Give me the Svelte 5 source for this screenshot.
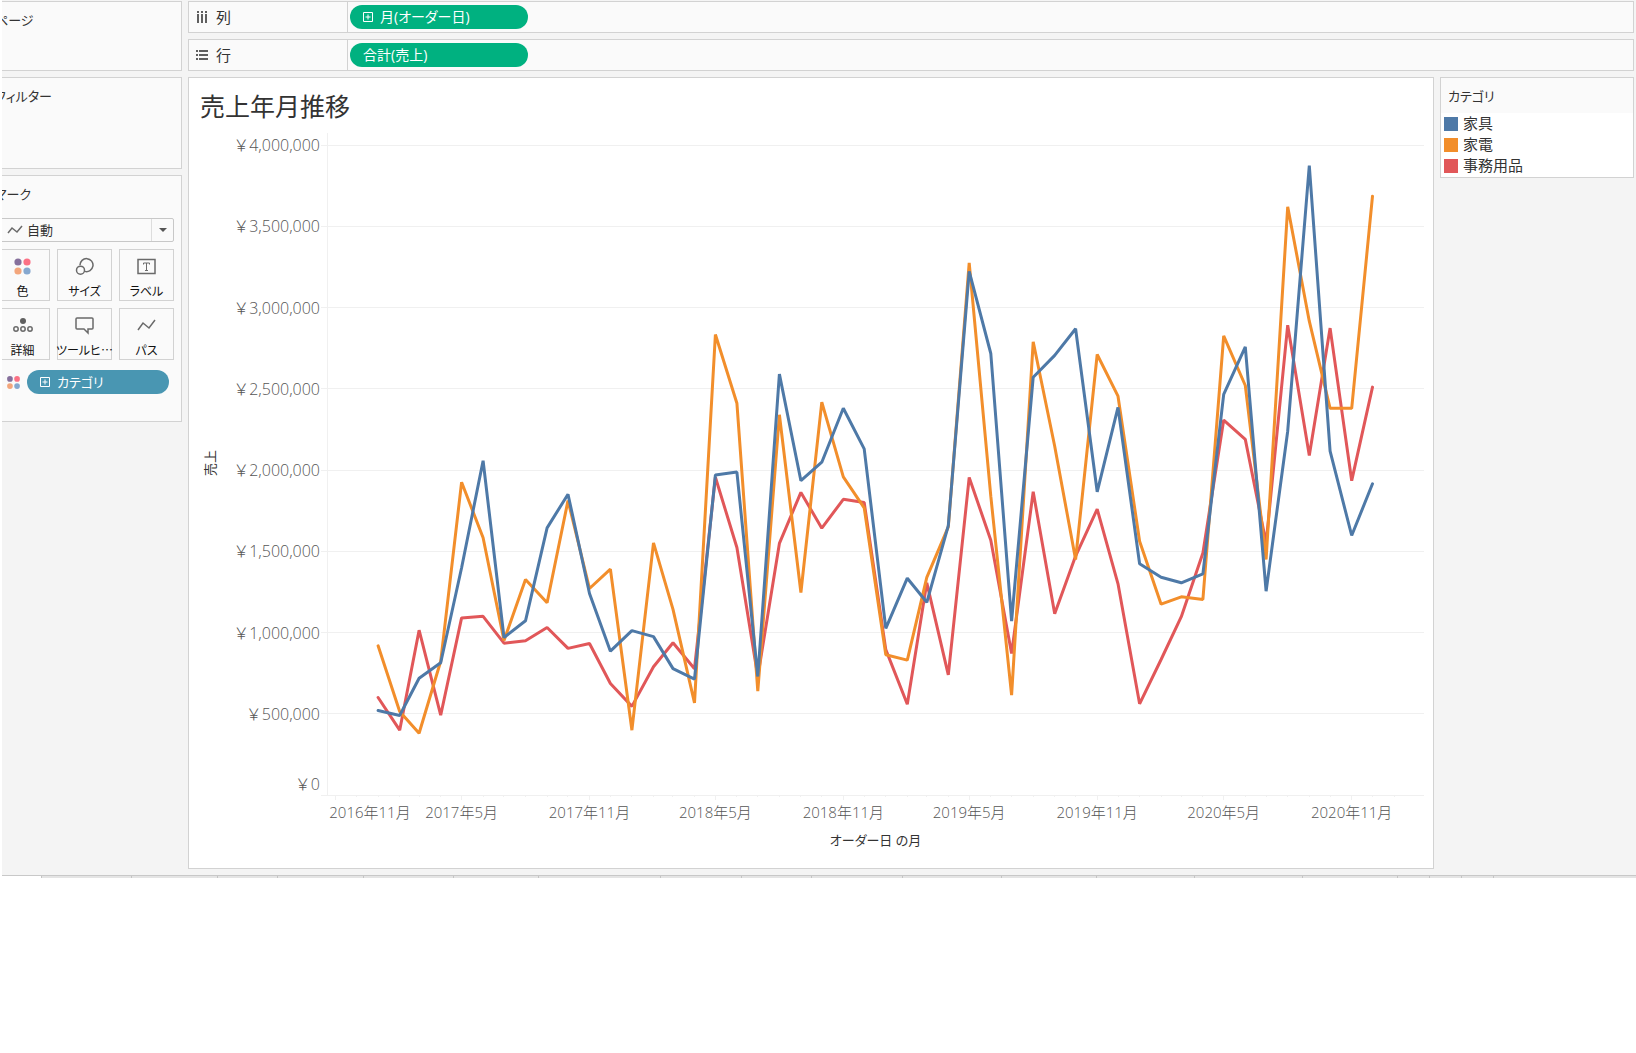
<script lang="ts">
  type Series = { name: string; color: string; values: number[] };

  // monthly sales from January 2017, in thousands of yen
  const series: Series[] = [
    {
      name: "家具",
      color: "#4e79a7",
      values: [
        520, 489, 719, 814, 1398, 2057, 969, 1072, 1644, 1851, 1240, 885,
        1012, 975, 778, 713, 1970, 1987, 729, 2590, 1934, 2048, 2380, 2130,
        1025, 1334, 1186, 1657, 3223, 2717, 1070, 2571, 2705, 2869, 1866, 2385,
        1423, 1340, 1306, 1361, 2465, 2758, 1254, 2239, 3874, 2116, 1597, 1915,
      ],
    },
    {
      name: "家電",
      color: "#f28e2b",
      values: [
        918, 514, 380, 823, 1925, 1583, 951, 1326, 1183, 1812, 1271, 1390,
        399, 1552, 1142, 567, 2834, 2411, 639, 2340, 1246, 2417, 1958, 1767,
        863, 830, 1340, 1650, 3275, 1839, 614, 2789, 2146, 1449, 2711, 2454,
        1562, 1174, 1220, 1203, 2826, 2520, 1449, 3620, 2916, 2380, 2380, 3685,
      ],
    },
    {
      name: "事務用品",
      color: "#e15759",
      values: [
        600, 399, 1014, 491, 1090, 1100, 934, 949, 1031, 902, 932, 686,
        545, 789, 937, 777, 1956, 1523, 729, 1548, 1862, 1642, 1820, 1800,
        895, 559, 1306, 740, 1954, 1568, 871, 1866, 1115, 1470, 1759, 1300,
        561, 834, 1097, 1490, 2307, 2188, 1550, 2891, 2089, 2873, 1934, 2510,
      ],
    },
  ];

  const left = 138;
  const top = 15;
  const bottom = 665;
  const start = Date.UTC(2016, 9, 19, 12);
  const end = Date.UTC(2021, 1, 13);
  const yTicks = [0, 500, 1000, 1500, 2000, 2500, 3000, 3500, 4000];

  let width = $state(1244);
  let right = $derived(width - 9);

  // months are counted from January 2017
  function x(month: number) {
    return left + ((Date.UTC(2017, month, 1) - start) / (end - start)) * (right - left);
  }
  function y(value: number) {
    return bottom - (value / 4000) * (bottom - top);
  }
  function points(s: Series) {
    return s.values.map((v, i) => `${x(i).toFixed(1)},${y(v).toFixed(1)}`).join(" ");
  }
  function monthLabel(month: number) {
    const d = new Date(Date.UTC(2017, month, 1));
    return `${d.getUTCFullYear()}年${d.getUTCMonth() + 1}月`;
  }

  const months = Array.from({ length: 51 }, (_, i) => i - 2);
  const majors = months.filter((m) => (m + 2) % 6 === 0 && m < 48);
  const dividers = [41, 131, 217, 277, 363, 453, 538, 660, 741, 811, 902, 1001, 1096, 1194, 1302, 1397, 1429, 1461, 1493];
  let mark = $state("auto");
</script>

{#snippet dots()}
  <circle cx="5" cy="5" r="3.6" fill="#86709c" />
  <circle cx="14" cy="5" r="3.6" fill="#fb7185" />
  <circle cx="5" cy="14" r="3.6" fill="#f3a67c" />
  <circle cx="14" cy="14" r="3.6" fill="#86a8cf" />
{/snippet}

{#snippet plus()}
  <svg class="plus" width="10" height="10" viewBox="0 0 10 10">
    <path d="M.5.5h9v9h-9zM5 2.5v5M2.5 5h5" />
  </svg>
{/snippet}

<div class="workspace">
  <aside class="sidebar">
    <section class="card pages"><h2>ページ</h2></section>
    <section class="card filters"><h2>フィルター</h2></section>
    <section class="card marks">
      <h2>マーク</h2>
      <div class="mark-type">
        <svg width="16" height="12" viewBox="0 0 16 12" class="line-icon"><path d="M1 9l4-5 5 4 5-6" /></svg>
        <select bind:value={mark} aria-label="マーク">
          <option value="auto">自動</option>
        </select>
        <span class="arrow"></span>
      </div>
      <div class="mark-grid">
        <button>
          <svg width="19" height="19" viewBox="0 0 19 19">{@render dots()}</svg>
          <span>色</span>
        </button>
        <button>
          <svg width="19" height="19" viewBox="0 0 19 19" class="line-icon">
            <path d="M5 8.2A6.5 6.5 0 1 1 9.8 14.4" />
            <circle cx="5.5" cy="13.2" r="4" />
          </svg>
          <span>サイズ</span>
        </button>
        <button>
          <svg width="19" height="19" viewBox="0 0 19 19" class="line-icon">
            <path d="M1 2.5h17v14H1z" />
            <path class="thin" d="M6.5 7.5V6h6v1.500M9.500 6v7.500M8 13.500h3" />
          </svg>
          <span>ラベル</span>
        </button>
        <button>
          <svg width="20" height="19" viewBox="0 0 20 19" class="line-icon">
            <circle cx="10" cy="5" r="3" class="solid" />
            <circle cx="3" cy="13" r="2.2" />
            <circle cx="10" cy="13" r="2.2" />
            <circle cx="17" cy="13" r="2.2" />
          </svg>
          <span>詳細</span>
        </button>
        <button>
          <svg width="19" height="19" viewBox="0 0 19 19" class="line-icon">
            <path d="M2 2h15a1 1 0 0 1 1 1v9a1 1 0 0 1-1 1h-4v4l-4-4H2a1 1 0 0 1-1-1V3a1 1 0 0 1 1-1z" />
          </svg>
          <span>ツールヒ⋯</span>
        </button>
        <button>
          <svg width="19" height="19" viewBox="0 0 19 19" class="line-icon"><path d="M1 14l5-7 6 5 6-8" /></svg>
          <span>パス</span>
        </button>
      </div>
      <div class="encoding">
        <svg width="15" height="15" viewBox="0 0 19 19">{@render dots()}</svg>
        <button class="pill dimension">{@render plus()}カテゴリ</button>
      </div>
    </section>
  </aside>

  <main>
    <div class="shelf">
      <div class="shelf-name">
        <svg width="12" height="12" viewBox="0 0 12 12" class="solid">
          <path d="M1 0h2v2H1zM5 0h2v2H5zM9 0h2v2H9zM1 3h2v9H1zM5 3h2v9H5zM9 3h2v9H9z" />
        </svg>
        列
      </div>
      <button class="pill measure">{@render plus()}月(オーダー日)</button>
    </div>
    <div class="shelf">
      <div class="shelf-name">
        <svg width="12" height="12" viewBox="0 0 12 12" class="solid">
          <path d="M0 1h2v2H0zM0 5h2v2H0zM0 9h2v2H0zM3 1h9v2H3zM3 5h9v2H3zM3 9h9v2H3z" />
        </svg>
        行
      </div>
      <button class="pill measure">合計(売上)</button>
    </div>

    <div class="view">
      <section class="sheet">
        <h1>売上年月推移</h1>
        <div class="chart" bind:clientWidth={width}>
          <svg {width} height="738" role="img" aria-label="売上年月推移">
            <g class="grid">
              {#each yTicks as t}
                <line x1={left - 6} x2={right} y1={y(t)} y2={y(t)} />
              {/each}
              <line x1={left} x2={left} y1="3" y2={bottom} />
              {#each months as m}
                <line x1={x(m)} x2={x(m)} y1={bottom} y2={bottom + (majors.includes(m) ? 5 : 2)} />
              {/each}
            </g>
            {#each [...series].reverse() as s}
              <polyline points={points(s)} stroke={s.color} />
            {/each}
            <g class="tick y">
              {#each yTicks as t}
                <text x={left - 7} y={t ? y(t) + 6 : bottom - 5}>￥{(t * 1000).toLocaleString("en-US")}</text>
              {/each}
            </g>
            <g class="tick">
              {#each majors as m}
                <text x={Math.max(x(m), left + 43)} y={bottom + 23}>{monthLabel(m)}</text>
              {/each}
            </g>
            <text class="axis-title" x={(left + right) / 2} y={bottom + 50}>オーダー日 の月</text>
            <text class="axis-title" transform="translate(26 333) rotate(-90)">売上</text>
          </svg>
        </div>
      </section>

      <section class="card legend">
        <h2>カテゴリ</h2>
        <ul>
          {#each series as s}
            <li><span class="swatch" style:background={s.color}></span>{s.name}</li>
          {/each}
        </ul>
      </section>
    </div>
  </main>
</div>
<svg class="tab-edge" width="100%" height="2">
  <rect class="strip" x={dividers[0]} width="100%" height="2" />
  {#each dividers as d}
    <rect x={d} width="1" height="2" />
  {/each}
</svg>

<style>
  :global(body) {
    background: #fff;
    color: #333;
    font-family: "Open Sans", "Noto Sans CJK JP", sans-serif;
    font-size: 15px;
  }
  h1,
  h2,
  ul {
    margin: 0;
    padding: 0;
    font-weight: 400;
  }
  h2,
  .mark-grid span,
  .pill,
  .axis-title {
    font-feature-settings: "palt";
  }
  button,
  select {
    font: inherit;
    color: inherit;
  }
  .workspace {
    display: flex;
    gap: 6px;
    margin-left: 2px;
    padding: 1px 2px 6px 0;
    overflow: hidden;
    background: #f4f4f4;
    border-bottom: 1px solid #c8c8c8;
  }
  .sidebar {
    flex: none;
    display: flex;
    flex-direction: column;
    gap: 6px;
    width: 191px;
    margin-left: -11px;
  }
  .card {
    box-sizing: border-box;
    background: #fafafa;
    border: 1px solid #d2d2d2;
  }
  .card h2 {
    font-size: 13px;
    line-height: 20px;
    padding: 8px 0;
  }
  .sidebar .card {
    padding: 0 7px 0 3px;
  }
  .pages {
    min-height: 70px;
  }
  .filters {
    min-height: 92px;
  }
  .marks {
    min-height: 247px;
  }
  .mark-type {
    display: flex;
    align-items: center;
    height: 22px;
    margin-top: 6px;
    padding-left: 11px;
    border: 1px solid #c8c8c8;
    border-radius: 2px;
  }
  .mark-type select {
    flex: 1;
    min-width: 0;
    height: 22px;
    padding: 0 4px;
    border: none;
    background: transparent;
    appearance: none;
    font-size: 13px;
  }
  .arrow {
    display: flex;
    align-items: center;
    justify-content: center;
    width: 21px;
    height: 22px;
    border-left: 1px solid #ddd;
  }
  .arrow::after {
    content: "";
    border: 4px solid transparent;
    border-top-color: #555;
    border-bottom: none;
  }
  .mark-grid {
    display: grid;
    grid-template-columns: repeat(3, 1fr);
    gap: 7px;
    margin-top: 7px;
  }
  .mark-grid button {
    display: flex;
    flex-direction: column;
    align-items: center;
    justify-content: space-between;
    min-width: 0;
    height: 52px;
    padding: 7px 0 0;
    background: #fafafa;
    border: 1px solid #d2d2d2;
    color: #111;
    font-size: 12px;
    line-height: 18px;
    white-space: nowrap;
  }
  .mark-grid span {
    height: 17px;
  }
  .line-icon {
    fill: none;
    stroke: #6a6a6a;
    stroke-width: 1.5;
  }
  .thin {
    stroke-width: 1;
  }
  .solid {
    fill: #5f5f5f;
    stroke: none;
  }
  .encoding {
    display: flex;
    align-items: center;
    gap: 6px;
    margin: 10px 5px 0 11px;
  }
  .encoding .pill {
    flex: 1;
  }
  .pill {
    display: flex;
    align-items: center;
    gap: 7px;
    height: 24px;
    padding: 0 13px;
    border: none;
    border-radius: 12px;
    color: #fff;
    font-size: 14px;
    line-height: 24px;
  }
  .dimension {
    background: #4996b2;
    font-size: 13px;
  }
  .measure {
    width: 178px;
    background: #00b180;
  }
  .plus {
    fill: none;
    stroke: #fff;
  }
  main {
    flex: 1;
    min-width: 0;
    display: flex;
    flex-direction: column;
    gap: 6px;
  }
  .shelf {
    display: flex;
    align-items: center;
    gap: 2px;
    height: 30px;
    background: #fafafa;
    border: 1px solid #d2d2d2;
  }
  .shelf-name {
    box-sizing: border-box;
    display: flex;
    align-items: center;
    gap: 8px;
    width: 159px;
    height: 30px;
    padding-left: 7px;
    border-right: 1px solid #d2d2d2;
    line-height: 20px;
  }
  .view {
    display: flex;
    align-items: flex-start;
    gap: 6px;
  }
  .sheet {
    flex: 1;
    min-width: 0;
    background: #fff;
    border: 1px solid #d2d2d2;
  }
  .sheet h1 {
    padding: 10px 11px 6px;
    font-size: 25px;
    line-height: 36px;
  }
  .chart {
    overflow: hidden;
  }
  .chart svg {
    display: block;
  }
  .grid line {
    stroke: #f0f0f0;
    shape-rendering: crispEdges;
  }
  polyline {
    fill: none;
    stroke-width: 3;
    stroke-linejoin: bevel;
    stroke-linecap: round;
  }
  .tick text {
    fill: #555;
    font-size: 15px;
    font-weight: 300;
    text-anchor: middle;
  }
  .tick.y text {
    font-size: 16px;
    text-anchor: end;
  }
  .axis-title {
    fill: #333;
    font-size: 13px;
    text-anchor: middle;
  }
  .legend {
    flex: none;
    width: 194px;
  }
  .legend h2 {
    padding: 8px 7px 7px;
  }
  .legend ul {
    padding-bottom: 1px;
    background: #fff;
    list-style: none;
  }
  .legend li {
    display: flex;
    align-items: center;
    gap: 5px;
    height: 21px;
    padding-left: 3px;
    line-height: 21px;
  }
  .swatch {
    width: 14px;
    height: 14px;
  }
  .tab-edge {
    display: block;
  }
  .tab-edge rect {
    fill: #c4c4c4;
  }
  .tab-edge .strip {
    fill: #e4e4e4;
  }
</style>
